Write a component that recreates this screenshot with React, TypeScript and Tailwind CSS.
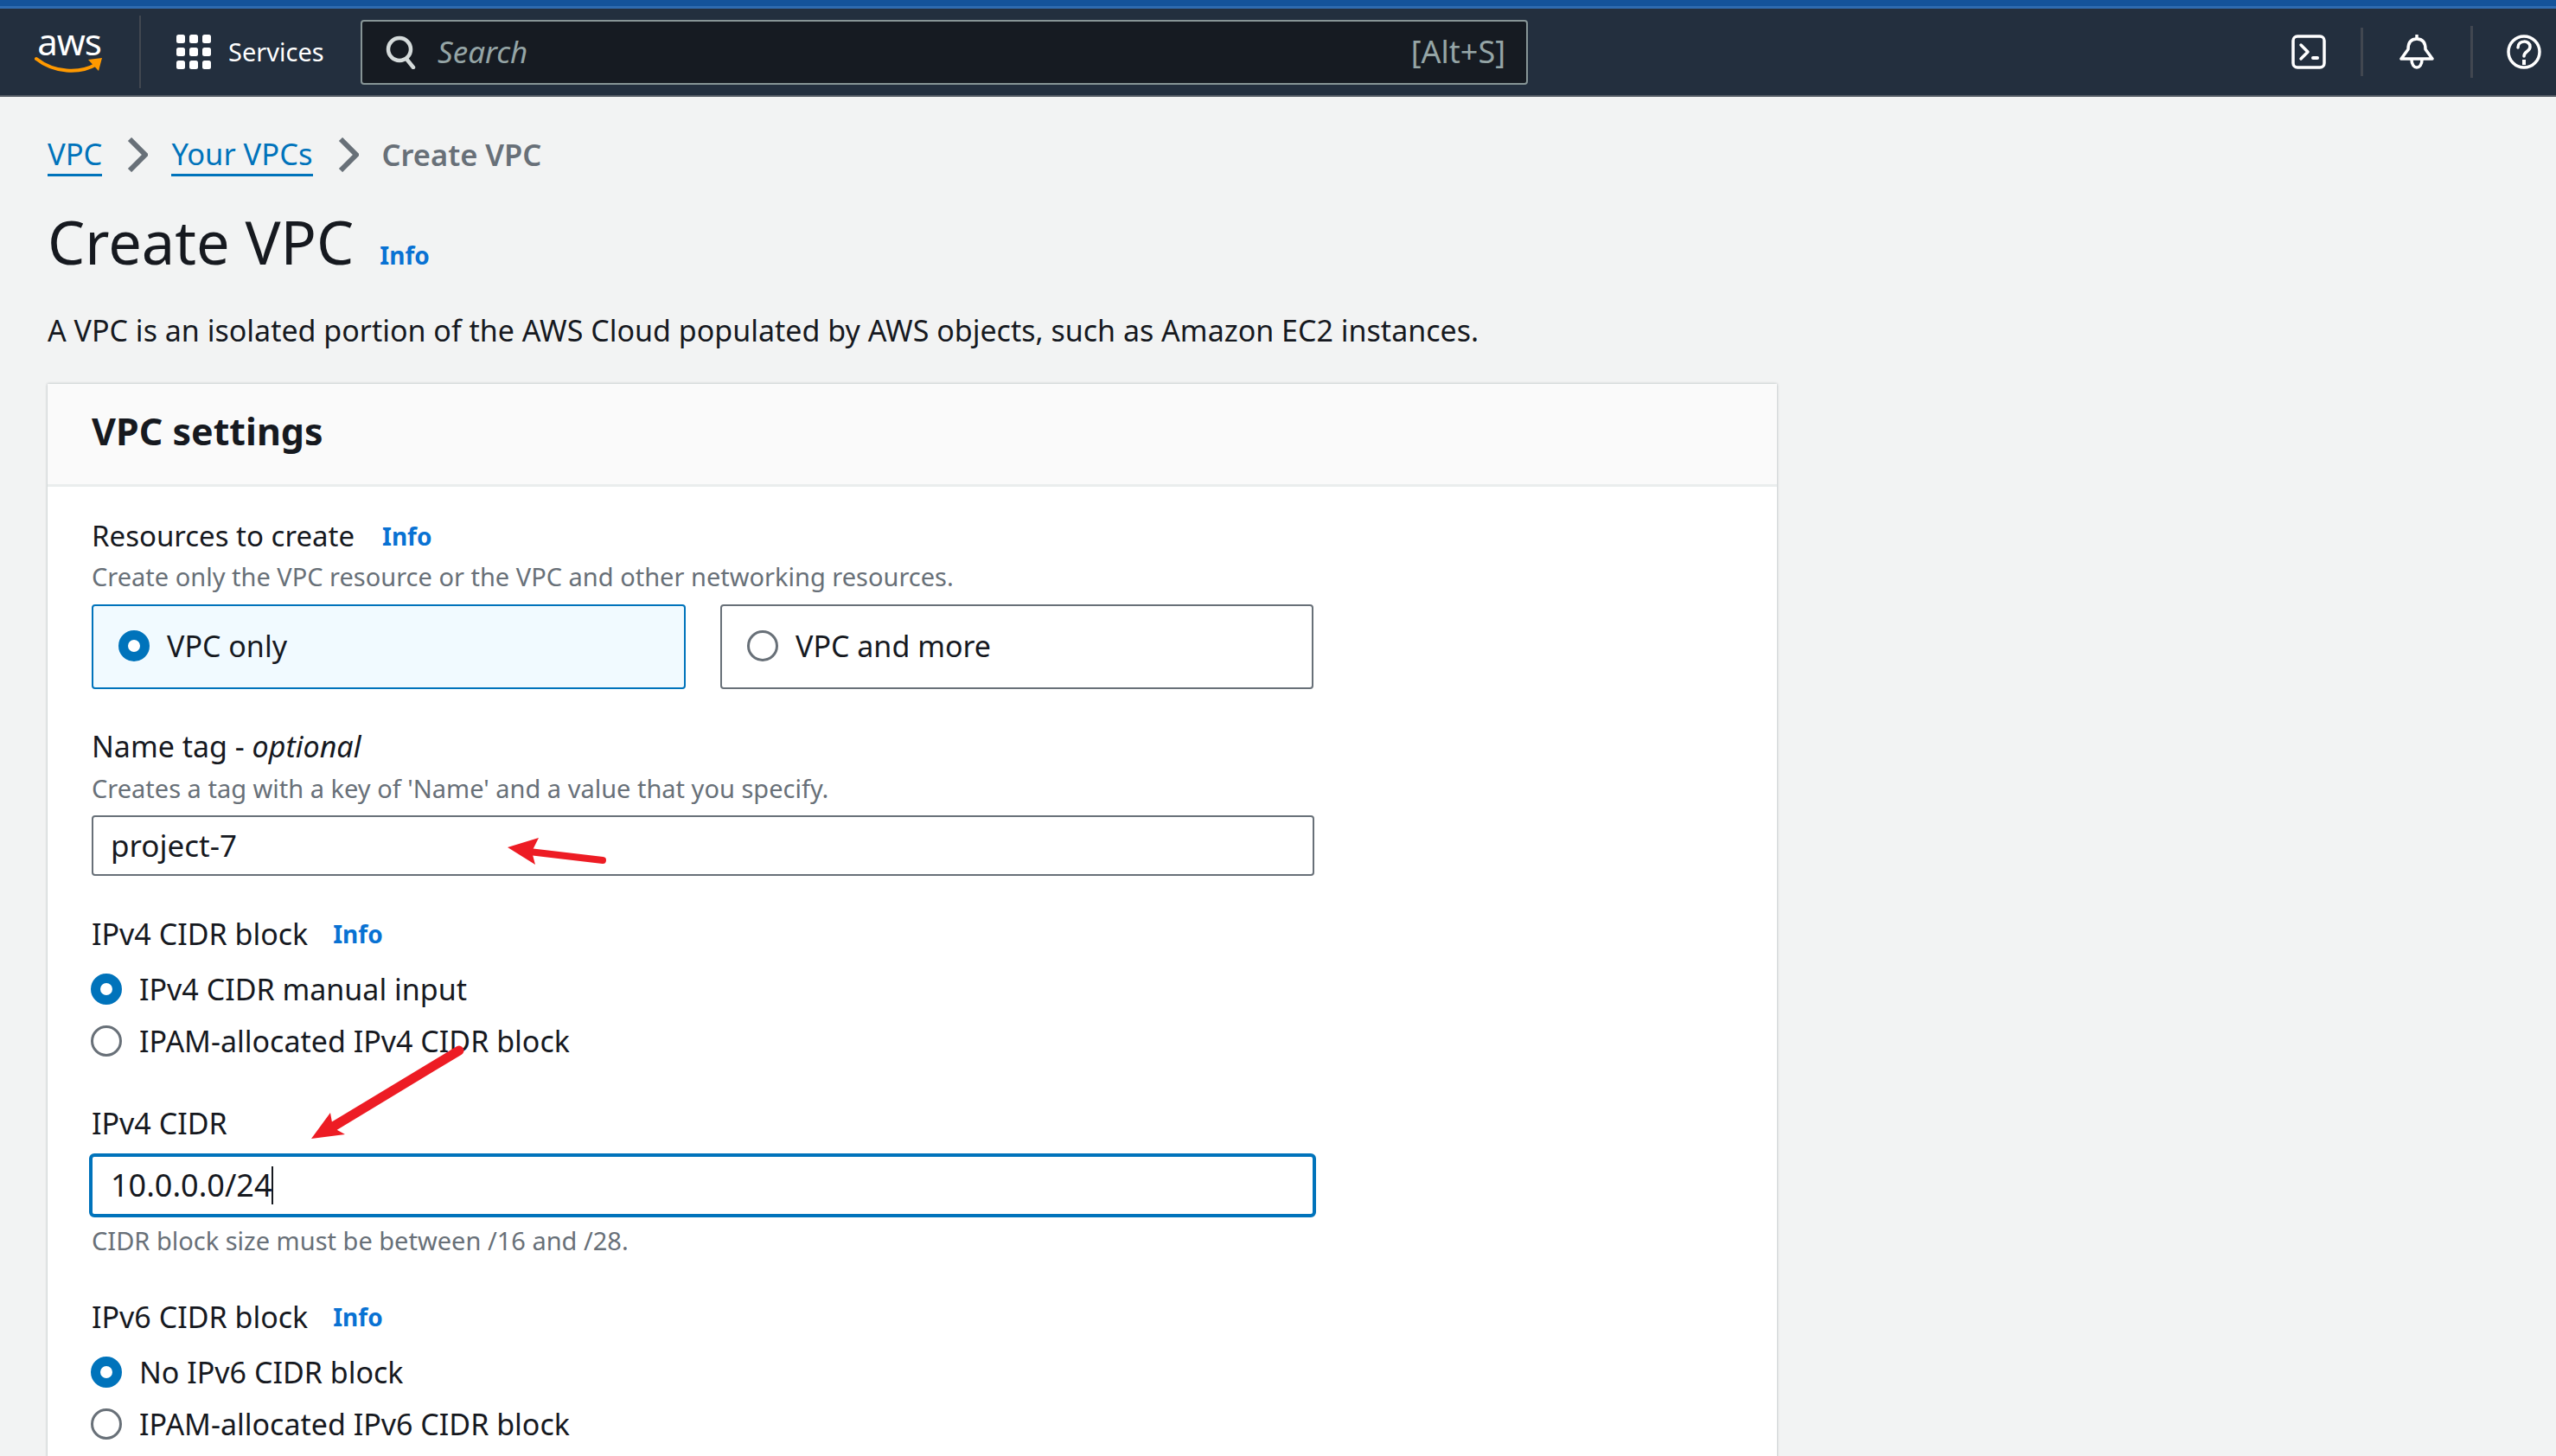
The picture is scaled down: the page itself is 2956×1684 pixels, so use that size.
import { FC, ReactNode } from 'react';

const FONT = 'font-["Noto_Sans",sans-serif]';

const Info: FC<{ className?: string }> = ({ className }) => (
  <span className={`text-[28px] leading-none font-bold text-[#0972d3] ${className ?? ''}`}>Info</span>
);

const AwsLogo = () => (
  <div className="flex flex-col items-center w-[84px]">
    <span className="text-[42px] leading-[34px] text-white tracking-[-1px]">aws</span>
    <svg viewBox="0 0 80 24" className="w-[80px] h-[24px]">
      <path d="M2 3 C 22 19, 52 21, 72 9" fill="none" stroke="#ff9900" strokeWidth="4" strokeLinecap="round" />
      <path d="M62 4 L78 2 L74 17 Z" fill="#ff9900" />
    </svg>
  </div>
);

const GridIcon = () => (
  <svg viewBox="0 0 40 40" className="w-[40px] h-[40px]">
    {[0, 1, 2].map((r) =>
      [0, 1, 2].map((c) => <rect key={`${r}${c}`} x={c * 15} y={r * 15} width="10" height="10" rx="2.5" fill="#fff" />),
    )}
  </svg>
);

const SearchIcon = () => (
  <svg viewBox="0 0 36 40" className="w-[36px] h-[40px]" fill="none" stroke="#d5dbdb" strokeWidth="4.5">
    <circle cx="16" cy="17" r="13" />
    <path d="M24 28 L32 38" strokeLinecap="round" />
  </svg>
);

const TerminalIcon = () => (
  <svg viewBox="0 0 40 40" className="w-[40px] h-[40px]" fill="none" stroke="#fff" strokeWidth="3.5" strokeLinecap="round" strokeLinejoin="round">
    <rect x="2" y="2" width="36" height="36" rx="5" />
    <path d="M11 12 L19 20 L11 28" />
    <path d="M25 27 H30" strokeWidth="4" />
  </svg>
);

const BellIcon = () => (
  <svg viewBox="0 0 40 40" className="w-[40px] h-[40px]" fill="none" stroke="#fff" strokeWidth="3.5" strokeLinecap="round" strokeLinejoin="round">
    <path d="M2 28 H38 L30 17 C30 8 26 5 20 5 C14 5 10 8 10 17 Z" />
    <path d="M20 1 V4" />
    <path d="M14 29 C14 41 26 41 26 29" />
  </svg>
);

const HelpIcon = () => (
  <svg viewBox="0 0 40 40" className="w-[40px] h-[40px]" fill="none" stroke="#fff" strokeWidth="3.5" strokeLinecap="round">
    <circle cx="20" cy="20" r="18" />
    <path d="M13 15 C13 6 27 6 27 14 C27 20 20 19 20 25" />
    <path d="M20 31 V33" strokeWidth="4" strokeLinecap="square" />
  </svg>
);

const Chevron = () => (
  <svg viewBox="0 0 24 40" className="w-[24px] h-[40px] ml-[29px] mr-[27px]" fill="none" stroke="#687078" strokeWidth="6">
    <path d="M3 2 L21 20 L3 38" />
  </svg>
);

const Radio: FC<{ checked?: boolean }> = ({ checked }) =>
  checked ? (
    <span className="block w-[36px] h-[36px] rounded-full border-[11px] border-[#0073bb] bg-white shrink-0" />
  ) : (
    <span className="block w-[36px] h-[36px] rounded-full border-[3px] border-[#687078] bg-white shrink-0" />
  );

const RadioRow: FC<{ checked?: boolean; children: ReactNode }> = ({ checked, children }) => (
  <div className="flex items-center gap-[20px] h-[60px] ml-[-1px] text-[34px] text-[#16191f]">
    <Radio checked={checked} />
    <span>{children}</span>
  </div>
);

export default function App() {
  return (
    <div className={`${FONT} w-[2956px] h-[1684px] relative overflow-hidden bg-[#f2f3f3] text-[#16191f]`}>
      <div className="h-[7px] bg-[#14539a]" />
      <div className="h-[3px] bg-[#2f6bb0]" />

      {/* Top navigation */}
      <header className="h-[102px] bg-[#232f3e] border-b-[2px] border-[#545b64] flex items-center text-white">
        <div className="pl-[38px] w-[161px] shrink-0">
          <AwsLogo />
        </div>
        <div className="w-[2px] h-[84px] bg-[#414750]" />
        <div className="ml-[41px] flex items-center gap-[20px] w-[213px] shrink-0">
          <GridIcon />
          <span className="text-[29px]">Services</span>
        </div>
        <div className="w-[1350px] h-[75px] rounded-[4px] border-[2px] border-[#879596] bg-[#161b22] flex items-center pl-[27px] pr-[24px]">
          <SearchIcon />
          <span className="ml-[24px] text-[35px] italic text-[#95a5a6]">Search</span>
          <span className="ml-auto text-[36px] text-[#95a5a6]">[Alt+S]</span>
        </div>
        <div className="ml-auto flex items-center mr-[17px]">
          <TerminalIcon />
          <div className="w-[3px] h-[56px] bg-[#414750] ml-[40px] mr-[42px]" />
          <BellIcon />
          <div className="w-[3px] h-[60px] bg-[#414750] ml-[42px] mr-[39px]" />
          <HelpIcon />
        </div>
      </header>

      {/* Breadcrumbs */}
      <nav className="flex items-center h-[60px] mt-[37px] ml-[55px] text-[34.5px]">
        <a className="text-[#0073bb] border-b-[3px] border-[#0073bb] leading-[46px]">VPC</a>
        <Chevron />
        <a className="text-[#0073bb] border-b-[3px] border-[#0073bb] leading-[46px]">Your VPCs</a>
        <Chevron />
        <span className="text-[#687078] font-semibold">Create VPC</span>
      </nav>

      {/* Title */}
      <div className="flex items-baseline ml-[55px] mt-[27px] h-[88px]">
        <h1 className="text-[68.5px] leading-[88px] font-normal">Create VPC</h1>
        <Info className="ml-[30px]" />
      </div>
      <p className="ml-[55px] mt-[34px] text-[34px] leading-[48px]">
        A VPC is an isolated portion of the AWS Cloud populated by AWS objects, such as Amazon EC2 instances.
      </p>

      {/* VPC settings card */}
      <section className="ml-[55px] mt-[38px] w-[2000px] h-[1300px] bg-white shadow-[0_0_3px_rgba(0,28,36,0.3)]">
        <div className="h-[119px] bg-[#fafafa] border-b-[3px] border-[#eaeded] flex items-center pl-[51px] pb-[6px]">
          <h2 className="text-[43px] font-bold">VPC settings</h2>
        </div>

        <div className="pl-[51px] pt-[33px]">
          <div className="flex items-center h-[48px] text-[33px]">
            <span>Resources to create</span>
            <Info className="ml-[32px]" />
          </div>
          <p className="text-[29px] leading-[46px] text-[#687078]">
            Create only the VPC resource or the VPC and other networking resources.
          </p>
          <div className="flex gap-[40px] mt-[9px]">
            <div className="w-[687px] h-[98px] rounded-[4px] border-[2px] border-[#0073bb] bg-[#f1faff] flex items-center pl-[29px] pb-[2px] gap-[20px] text-[34px]">
              <Radio checked />
              <span>VPC only</span>
            </div>
            <div className="w-[686px] h-[98px] rounded-[4px] border-[2px] border-[#687078] bg-white flex items-center pl-[29px] pb-[2px] gap-[20px] text-[34px]">
              <Radio />
              <span>VPC and more</span>
            </div>
          </div>

          <div className="mt-[42px] h-[48px] flex items-center text-[34px]">
            <span>
              Name tag - <em>optional</em>
            </span>
          </div>
          <p className="mt-[2px] text-[29px] leading-[46px] text-[#687078]">
            Creates a tag with a key of 'Name' and a value that you specify.
          </p>
          <div className="mt-[8px] w-[1414px] h-[70px] rounded-[4px] border-[2px] border-[#687078] flex items-center pl-[20px] text-[35px]">
            project-7
          </div>

          <div className="mt-[43px] h-[48px] flex items-center text-[34px]">
            <span>IPv4 CIDR block</span>
            <Info className="ml-[29px]" />
          </div>
          <div className="mt-[10px]">
            <RadioRow checked>IPv4 CIDR manual input</RadioRow>
            <RadioRow>IPAM-allocated IPv4 CIDR block</RadioRow>
          </div>

          <div className="mt-[41px] h-[48px] flex items-center text-[34px]">IPv4 CIDR</div>
          <div className="mt-[11px] w-[1419px] ml-[-3px] h-[74px] rounded-[6px] border-[4px] border-[#0073bb] flex items-center pl-[21px] text-[36px]">
            10.0.0.0/24
            <span className="w-[2px] h-[44px] bg-[#16191f]" />
          </div>
          <p className="mt-[4px] text-[29px] leading-[46px] text-[#687078]">CIDR block size must be between /16 and /28.</p>

          <div className="mt-[41px] h-[48px] flex items-center text-[34px]">
            <span>IPv6 CIDR block</span>
            <Info className="ml-[29px]" />
          </div>
          <div className="mt-[10px]">
            <RadioRow checked>No IPv6 CIDR block</RadioRow>
            <RadioRow>IPAM-allocated IPv6 CIDR block</RadioRow>
          </div>
        </div>
      </section>

      {/* Red annotation arrows */}
      <svg className="absolute left-0 top-0 w-[2956px] h-[1684px] pointer-events-none" viewBox="0 0 2956 1684">
        <path d="M697 995 L612 985" stroke="#ed1c24" strokeWidth="8" strokeLinecap="round" />
        <path d="M587 980 L623 969 L615 985 L619 1000 Z" fill="#ed1c24" />
        <path d="M531 1215 L387 1302" stroke="#ed1c24" strokeWidth="11" strokeLinecap="round" />
        <path d="M360 1317 L382 1287 L384 1298 L390 1307 L399 1312 Z" fill="#ed1c24" />
      </svg>
    </div>
  );
}
